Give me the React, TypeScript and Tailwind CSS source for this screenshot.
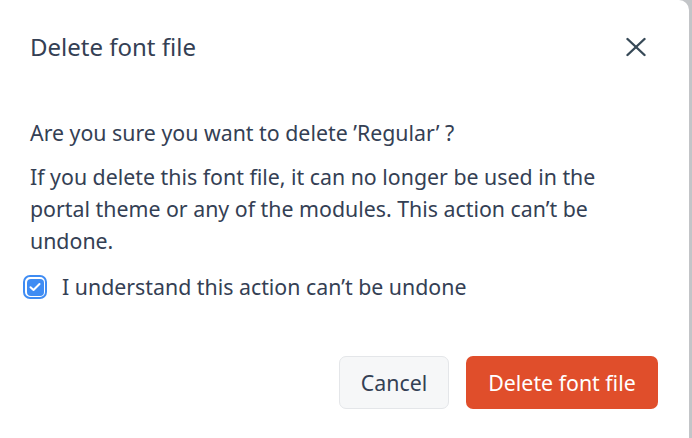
import React from "react";

export default function App() {
  return (
    <div
      className="w-[692px] h-[438px] bg-[#c3c5c8] flex overflow-hidden"
      style={{ fontFamily: '"Noto Sans", "Open Sans", sans-serif' }}
    >
      <div className="w-[689px] h-full bg-white rounded-tr-[10px] pl-[30px] pr-[31px] flex flex-col text-[#344054]">
        <div className="pt-[31px] flex items-center justify-between">
          <h2 className="text-[24px] leading-[32px] font-normal">Delete font file</h2>
          <button className="mr-[12px] w-5 h-5 flex items-center justify-center text-[#374957]" aria-label="Close">
            <svg width="20" height="20" viewBox="0 0 20 20" fill="none" stroke="currentColor" strokeWidth="2.4" strokeLinecap="round">
              <line x1="1.5" y1="2" x2="18.5" y2="18" />
              <line x1="18.5" y1="2" x2="1.5" y2="18" />
            </svg>
          </button>
        </div>
        <p className="mt-[54px] text-[21.33px] leading-[32px]">
          Are you sure you want to delete ’Regular’ ?
        </p>
        <p className="mt-[12px] text-[21.33px] leading-[32px] pr-[60px]">
          If you delete this font file, it can no longer be used in the portal theme or any of the modules. This action can’t be undone.
        </p>
        <label className="mt-[14px] flex items-center text-[21.33px] leading-[32px] -ml-[7px]">
          <span className="w-6 h-6 rounded-[7px] border-2 border-[#3f8cf3] p-[1.5px] flex mr-[15px]">
            <span className="flex-1 rounded-[4px] bg-[#3f8cf3] flex items-center justify-center">
              <svg width="12" height="10" viewBox="0 0 12 10" fill="none" stroke="white" strokeWidth="2" strokeLinecap="round" strokeLinejoin="round">
                <polyline points="1.5,5.2 4.5,8 10.5,2" />
              </svg>
            </span>
          </span>
          I understand this action can’t be undone
        </label>
        <div className="mt-[53px] flex justify-end gap-[17px]">
          <button className="w-[110px] h-[53px] rounded-[7px] border border-[#e4e6e9] bg-[#f6f7f8] text-[21.33px] text-[#344054]">
            Cancel
          </button>
          <button className="w-[192px] h-[53px] rounded-[7px] bg-[#e04e2b] text-[21.33px] text-white">
            Delete font file
          </button>
        </div>
      </div>
    </div>
  );
}
